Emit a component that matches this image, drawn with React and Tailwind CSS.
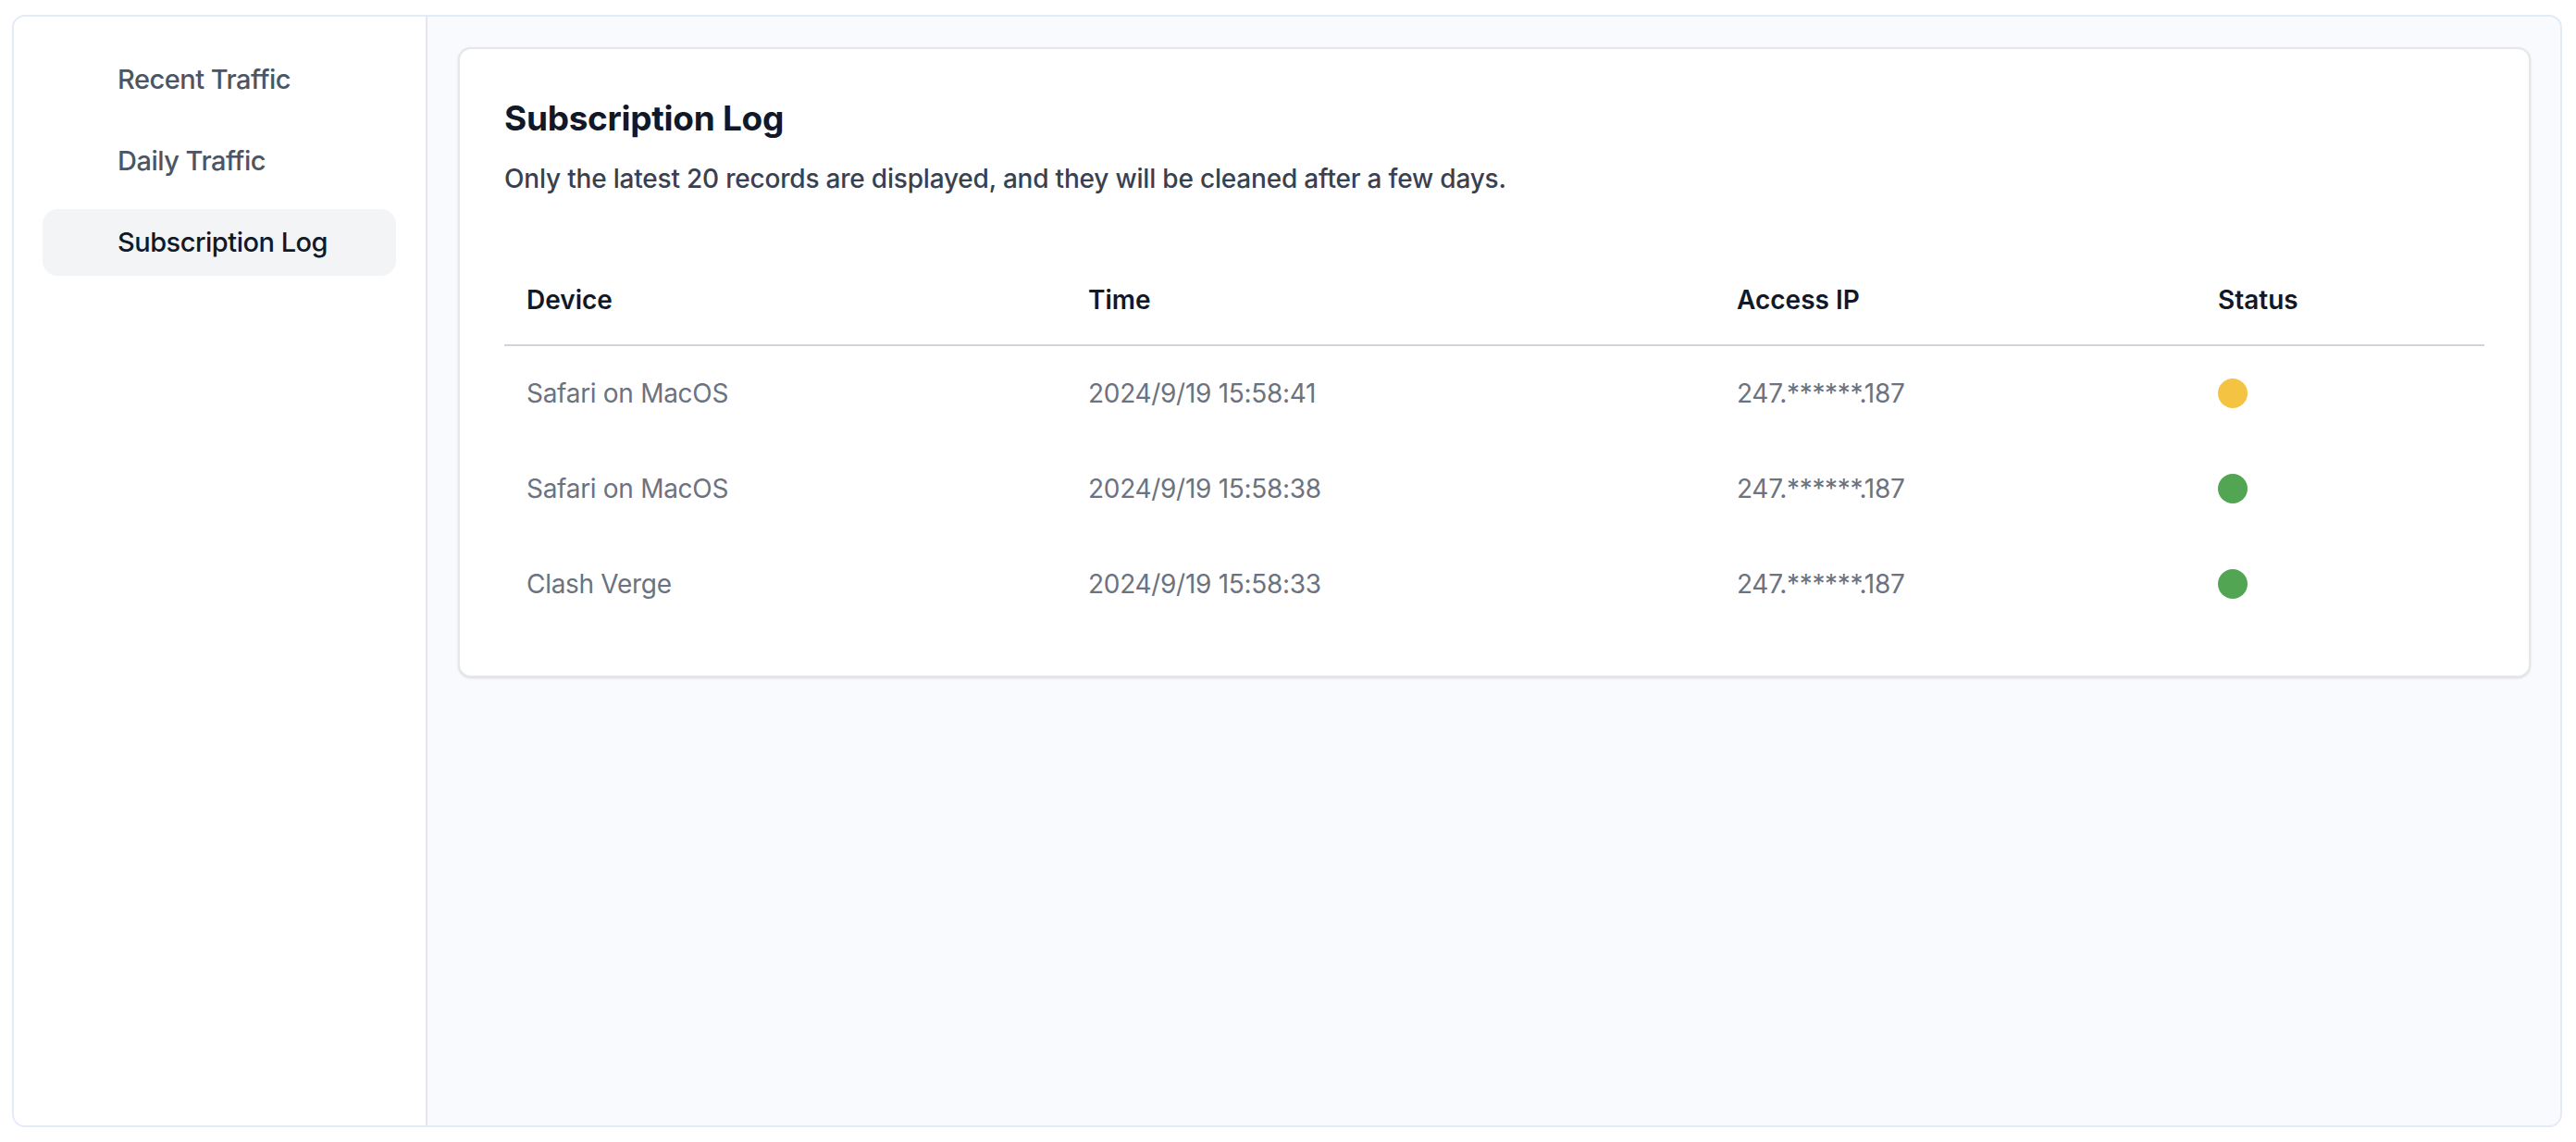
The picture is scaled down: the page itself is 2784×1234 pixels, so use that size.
import React from 'react';

const navItems = [
  { label: 'Recent Traffic', active: false },
  { label: 'Daily Traffic', active: false },
  { label: 'Subscription Log', active: true },
];

const logs = [
  { device: 'Safari on MacOS', time: '2024/9/19 15:58:41', ip: '247.******.187', status: 'pending' },
  { device: 'Safari on MacOS', time: '2024/9/19 15:58:38', ip: '247.******.187', status: 'ok' },
  { device: 'Clash Verge', time: '2024/9/19 15:58:33', ip: '247.******.187', status: 'ok' },
];

const App = () => {
  return (
    <div
      className="h-[1234px] w-full bg-white pt-[16px] pb-[16px] pl-[13px] pr-[15px]"
      style={{ fontFamily: 'Inter, "Noto Sans", sans-serif' }}
    >
      <div className="flex h-full overflow-hidden rounded-[14px] border-2 border-[#e2ebf6] bg-[#f9fafd]">
        {/* Sidebar */}
        <aside className="w-[447px] shrink-0 border-r-2 border-[#e5e7eb] bg-white pl-[31px] pr-[32px] pt-[32px]">
          <nav className="flex flex-col gap-[16px]">
            {navItems.map((item) => (
              <div
                key={item.label}
                className={`flex h-[72px] items-center rounded-2xl pl-[81px] text-[29px] font-medium tracking-[-0.5px] ${
                  item.active ? 'bg-[#f3f4f6] text-[#111827]' : 'text-[#4b5563]'
                }`}
              >
                {item.label}
              </div>
            ))}
          </nav>
        </aside>

        {/* Main */}
        <main className="flex-1 pt-[33px] pl-[33px] pr-[32px]">
          <div className="rounded-[14px] border-2 border-[#e5e7eb] bg-white p-12 shadow-sm">
            <h1 className="text-[37px] leading-[54px] font-bold tracking-[-0.3px] text-[#111827]">Subscription Log</h1>
            <p className="mt-[18px] text-[28px] leading-[40px] font-medium tracking-[-0.2px] text-[#374151]">
              Only the latest 20 records are displayed, and they will be cleaned after a few days.
            </p>

            <table className="mt-[59px] w-full table-fixed border-collapse text-left text-[28px] leading-[40px]">
              <colgroup>
                <col className="w-[607px]" />
                <col className="w-[701px]" />
                <col className="w-[520px]" />
                <col />
              </colgroup>
              <thead>
                <tr className="border-b-2 border-[#d1d5db]">
                  <th className="px-6 pt-[32px] pb-[28px] font-semibold text-[#111827]">Device</th>
                  <th className="px-6 pt-[32px] pb-[28px] font-semibold text-[#111827]">Time</th>
                  <th className="px-6 pt-[32px] pb-[28px] font-semibold text-[#111827]">Access IP</th>
                  <th className="px-6 pt-[32px] pb-[28px] font-semibold text-[#111827]">Status</th>
                </tr>
              </thead>
              <tbody>
                {logs.map((log, i) => (
                  <tr key={i} className="h-[103px] text-[#6b7280] tracking-[-0.3px]">
                    <td className="px-6 align-middle">{log.device}</td>
                    <td className="px-6 align-middle">{log.time}</td>
                    <td className="px-6 align-middle">{log.ip}</td>
                    <td className="px-6 align-middle">
                      <span
                        className={`block h-[32px] w-[32px] rounded-full ${
                          log.status === 'ok' ? 'bg-[#52a552]' : 'bg-[#f5c342]'
                        }`}
                      />
                    </td>
                  </tr>
                ))}
              </tbody>
            </table>
          </div>
        </main>
      </div>
    </div>
  );
};

export default App;
